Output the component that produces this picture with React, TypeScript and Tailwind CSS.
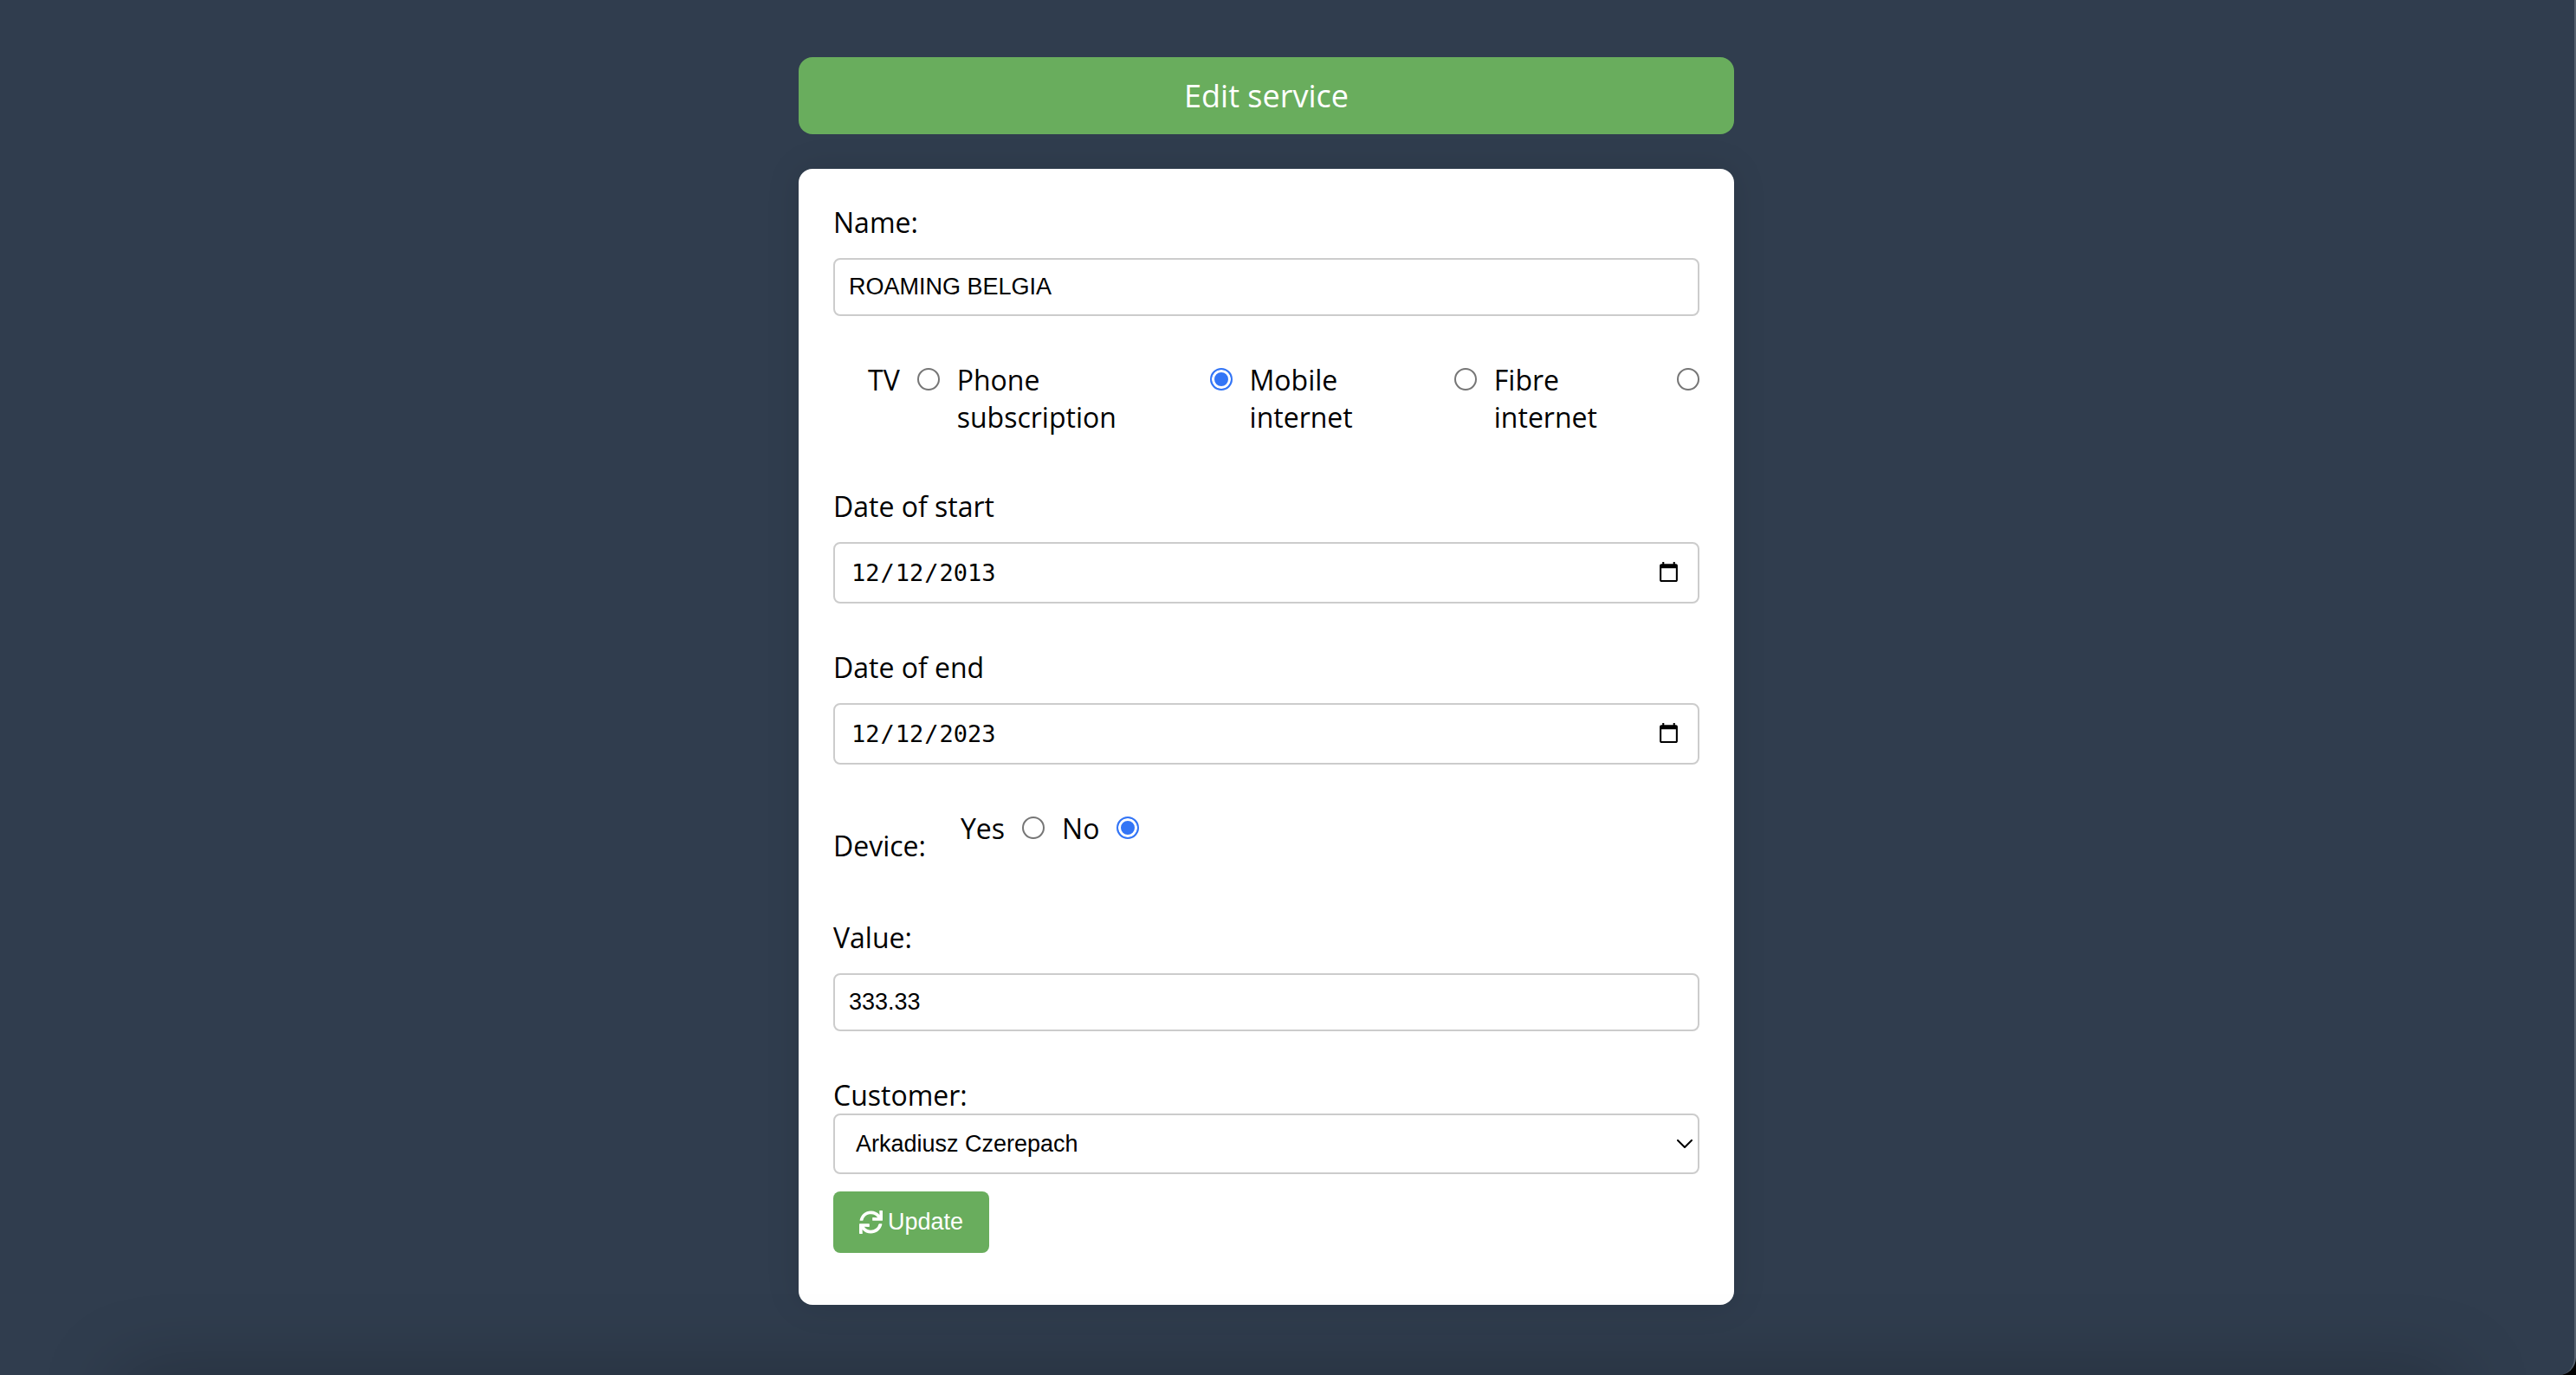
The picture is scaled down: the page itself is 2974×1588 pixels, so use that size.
import { useState } from "react";
import type { ReactNode } from "react";
import { FaSync } from "react-icons/fa";

const control =
  "block w-full rounded-lg border-2 border-[#ccc] bg-white font-['Liberation_Sans',Arial,sans-serif] text-[27px] text-black outline-none";

const dateControl =
  "block h-[71px] w-full rounded-lg border-2 border-[#ccc] bg-white px-[18px] font-['DejaVu_Sans_Mono',monospace] text-[27px] text-black outline-none";

function Radio({ id, name, checked, onChange }: { id: string; name: string; checked: boolean; onChange: () => void }) {
  return (
    <input
      id={id}
      type="radio"
      name={name}
      checked={checked}
      onChange={onChange}
      className="mt-2 size-[26px] shrink-0 appearance-none rounded-full border-2 border-[#767676] bg-white checked:border-[#3375f6] checked:bg-[#3375f6] checked:shadow-[inset_0_0_0_3px_white]"
    />
  );
}

function Field({ id, label, children }: { id: string; label: string; children: ReactNode }) {
  return (
    <div className="flex flex-col gap-5">
      <label htmlFor={id} className="block">
        {label}
      </label>
      {children}
    </div>
  );
}

const serviceTypes = ["TV", "Phone subscription", "Mobile internet", "Fibre internet"];

export default function App() {
  const [name, setName] = useState("ROAMING BELGIA");
  const [type, setType] = useState("Phone subscription");
  const [start, setStart] = useState("2013-12-12");
  const [end, setEnd] = useState("2023-12-12");
  const [device, setDevice] = useState("No");
  const [value, setValue] = useState("333.33");

  return (
    <div className="bg-black">
      <div className="relative min-h-screen overflow-hidden rounded-br-[20px] border-r-2 border-[#56616e] bg-[#303d4e] pt-[66px] pr-12 pb-20 font-['Open_Sans',sans-serif] text-[32px] leading-[43px] text-black">
        <main className="mx-auto flex max-w-[1080px] flex-col gap-10">
          <h1 className="rounded-2xl bg-[#69ad5d] py-5 text-center text-[36px] leading-[49px] text-white">
            Edit service
          </h1>

          <form
            onSubmit={(e) => e.preventDefault()}
            className="flex flex-col gap-[52px] rounded-2xl bg-white px-10 pt-10 pb-[60px] shadow-[0_0_40px_rgba(0,0,0,0.1)]"
          >
            <Field id="name" label="Name:">
              <input
                id="name"
                type="text"
                value={name}
                onChange={(e) => setName(e.target.value)}
                className={`${control} h-[67px] px-4`}
              />
            </Field>

            <div role="radiogroup" aria-label="Service type" className="mb-2 flex items-start gap-5 pl-10">
              {serviceTypes.map((t, i) => (
                <div key={t} className="contents">
                  <label htmlFor={`type-${i}`}>{t}</label>
                  <Radio id={`type-${i}`} name="type" checked={type === t} onChange={() => setType(t)} />
                </div>
              ))}
            </div>

            <Field id="start" label="Date of start">
              <input
                id="start"
                type="date"
                value={start}
                onChange={(e) => setStart(e.target.value)}
                className={dateControl}
              />
            </Field>

            <Field id="end" label="Date of end">
              <input id="end" type="date" value={end} onChange={(e) => setEnd(e.target.value)} className={dateControl} />
            </Field>

            <div className="flex items-start gap-10 pb-[11px]">
              <span id="device-label" className="pt-5">
                Device:
              </span>
              <div role="radiogroup" aria-labelledby="device-label" className="flex items-start gap-5">
                {["Yes", "No"].map((d) => (
                  <div key={d} className="flex items-start gap-5">
                    <label htmlFor={`device-${d}`}>{d}</label>
                    <Radio id={`device-${d}`} name="device" checked={device === d} onChange={() => setDevice(d)} />
                  </div>
                ))}
              </div>
            </div>

            <Field id="value" label="Value:">
              <input
                id="value"
                type="text"
                value={value}
                onChange={(e) => setValue(e.target.value)}
                className={`${control} h-[67px] px-4`}
              />
            </Field>

            <div>
              <label htmlFor="customer" className="block">
                Customer:
              </label>
              <div className="relative">
                <select id="customer" className={`${control} h-[70px] appearance-none px-6`}>
                  <option>Arkadiusz Czerepach</option>
                </select>
                <svg
                  viewBox="0 0 18 10"
                  aria-hidden="true"
                  className="pointer-events-none absolute top-[30px] right-2 h-2.5 w-[18px] fill-none stroke-black stroke-2"
                >
                  <path d="M1 1l8 8 8-8" strokeLinecap="round" strokeLinejoin="round" />
                </svg>
              </div>
              <button
                type="submit"
                className="mt-5 flex h-[71px] items-center gap-1.5 rounded-lg bg-[#69ad5d] px-[30px] font-['Liberation_Sans',Arial,sans-serif] text-[27px] text-white"
              >
                <FaSync aria-hidden="true" />
                Update
              </button>
            </div>
          </form>
        </main>

        <div
          aria-hidden="true"
          className="pointer-events-none absolute inset-x-[140px] top-full h-20 shadow-[0_0_90px_rgba(0,0,0,0.25)]"
        />
      </div>
    </div>
  );
}
